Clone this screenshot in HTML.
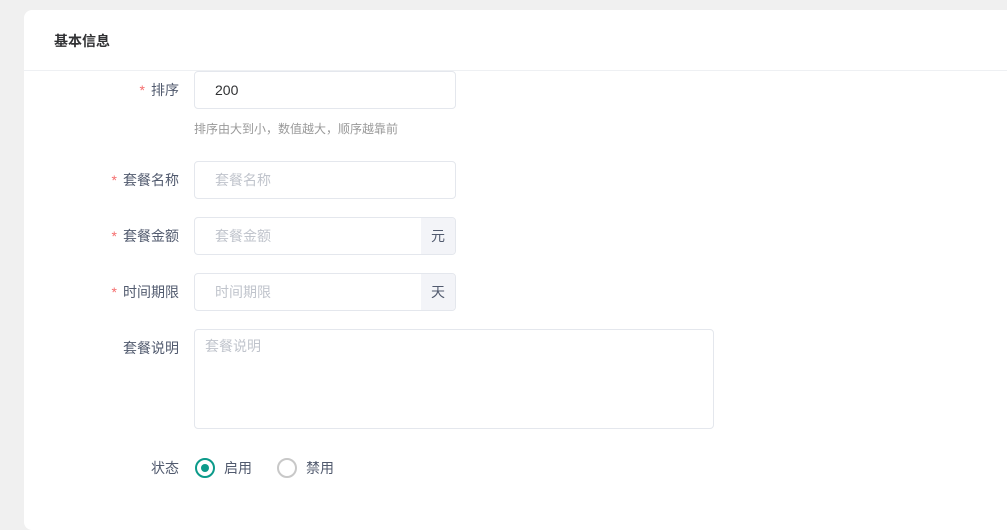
<!DOCTYPE html><html><head><meta charset="utf-8"><style>
*{box-sizing:border-box;margin:0;padding:0}
body{width:1007px;height:512px;background:#f0f0f0;font-family:"Liberation Sans","Noto Sans CJK SC",sans-serif;overflow:hidden;position:relative}
.card{position:absolute;left:24px;top:10px;width:1000px;height:520px;background:#fff;border-radius:8px}
.hd{position:absolute;left:0;top:0;width:100%;height:61px;border-bottom:1px solid #eef0f3}
.hd span{position:absolute;left:30px;top:21px;font-size:14px;font-weight:bold;color:#303133}
.a{position:absolute;font-size:14px;color:#606266}
.lbl{position:absolute;right:828px;width:160px;text-align:right;font-size:14px;color:#515a6e}
.lbl i{font-style:normal;color:#f56c6c;margin-right:6px}
.in{position:absolute;left:194px;width:262px;height:38px;border:1px solid #e4e7ed;border-radius:4px;background:#fff;font-size:14px;color:#c0c4cc;padding-left:20px;line-height:36px;overflow:hidden}
.ap{position:absolute;right:0;top:0;width:34px;height:36px;background:#f3f4f8;color:#515a6e;text-align:center}
</style></head><body>
<div class="card"><div class="hd"><span>基本信息</span></div></div>
<div class="lbl" style="top:80px"><i>*</i>排序</div>
<div class="in" style="top:71px;color:#303133">200</div>
<div class="a" style="left:194px;top:120px;font-size:12px;color:#999">排序由大到小，数值越大，顺序越靠前</div>
<div class="lbl" style="top:170px"><i>*</i>套餐名称</div>
<div class="in" style="top:161px">套餐名称</div>
<div class="lbl" style="top:226px"><i>*</i>套餐金额</div>
<div class="in" style="top:217px">套餐金额<div class="ap">元</div></div>
<div class="lbl" style="top:282px"><i>*</i>时间期限</div>
<div class="in" style="top:273px">时间期限<div class="ap">天</div></div>
<div class="lbl" style="top:338px">套餐说明</div>
<div class="in" style="top:329px;width:520px;height:100px;padding-left:10px;line-height:32px">套餐说明</div>
<div class="lbl" style="top:458px">状态</div>
<div style="position:absolute;left:195px;top:458px;width:20px;height:20px;border:2px solid #0c9a8a;border-radius:50%"><div style="position:absolute;left:4px;top:4px;width:8px;height:8px;border-radius:50%;background:#0c9a8a"></div></div>
<div class="a" style="left:224px;top:458px;color:#515a6e">启用</div>
<div style="position:absolute;left:277px;top:458px;width:20px;height:20px;border:2px solid #c8c8c8;border-radius:50%"></div>
<div class="a" style="left:306px;top:458px;color:#515a6e">禁用</div>
</body></html>
